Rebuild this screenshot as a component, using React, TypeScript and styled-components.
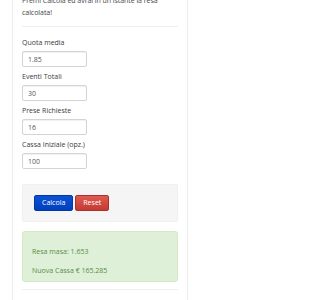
import React from 'react';
import styled, { createGlobalStyle } from 'styled-components';

const GlobalStyle = createGlobalStyle`
  body {
    margin: 0;
    background: #ffffff;
    font-family: 'Open Sans', 'Liberation Sans', sans-serif;
    color: #333333;
    overflow: hidden;
  }
`;

const Page = styled.div`
  margin-top: -5px;
  padding-left: 12px;
  width: 176px;
`;

const Card = styled.div`
  border-left: 1px solid #ececec;
  border-right: 1px solid #ececec;
  padding: 0 9px 10px 9px;
  background: #ffffff;
`;

const Intro = styled.p`
  margin: 0;
  font-size: 7px;
  line-height: 12px;
  color: #444444;
  white-space: nowrap;
  letter-spacing: -0.05px;
`;

const Rule = styled.hr`
  border: 0;
  border-top: 1px solid #eeeeee;
  margin: 7px 0 10px 0;
`;

const Field = styled.div`
  display: flex;
  flex-direction: column;
  align-items: flex-start;
  margin-bottom: 4px;
`;

const Label = styled.label`
  font-size: 7px;
  line-height: 11px;
  color: #3a3a3a;
  margin-bottom: 3px;
`;

const Input = styled.input`
  box-sizing: border-box;
  width: 65px;
  height: 16px;
  padding: 0 5px;
  border: 1px solid #d4d4d4;
  border-radius: 2px;
  box-shadow: inset 0 1px 1px rgba(0, 0, 0, 0.06);
  font-family: 'Open Sans', 'Liberation Sans', sans-serif;
  font-size: 7px;
  color: #555555;
  outline: none;
`;

const Well = styled.div`
  display: flex;
  gap: 2px;
  margin-top: 15px;
  padding: 10px 11px;
  background: #f5f5f5;
  border: 1px solid #f0f0f0;
  border-radius: 2px;
`;

const Button = styled.button<{ $tone: 'primary' | 'danger' }>`
  height: 16px;
  padding: 0 7px;
  border: 1px solid
    ${({ $tone }) => ($tone === 'primary' ? '#0038a8' : '#a8322b')};
  border-radius: 2px;
  background: ${({ $tone }) =>
    $tone === 'primary'
      ? 'linear-gradient(to bottom, #0a52d4, #0040bd)'
      : 'linear-gradient(to bottom, #e05a52, #c33a32)'};
  color: #ffffff;
  font-family: 'Open Sans', 'Liberation Sans', sans-serif;
  font-size: 7px;
  line-height: 14px;
`;

const Alert = styled.div`
  margin-top: 9px;
  padding: 14px 9px 4px 9px;
  background: #dff0d8;
  border: 1px solid #d6e9c6;
  border-radius: 3px;
  color: #5a8a4a;
  font-size: 7px;
`;

const AlertLine = styled.p`
  margin: 0 0 7px 0;
  line-height: 12px;

  &:last-child {
    margin-bottom: 0;
  }
`;

const BottomRule = styled.hr`
  border: 0;
  border-top: 1px solid #eeeeee;
  margin: 7px 0 0 0;
`;

const fields = [
  { label: 'Quota media', value: '1.85' },
  { label: 'Eventi Totali', value: '30' },
  { label: 'Prese Richieste', value: '16' },
  { label: 'Cassa Iniziale (opz.)', value: '100' },
];

export default function App() {
  return (
    <Page>
      <GlobalStyle />
      <Card>
        <Intro>
          Premi Calcola ed avrai in un istante la resa
          <br />
          calcolata!
        </Intro>
        <Rule />
        {fields.map((f) => (
          <Field key={f.label}>
            <Label>{f.label}</Label>
            <Input defaultValue={f.value} />
          </Field>
        ))}
        <Well>
          <Button $tone="primary">Calcola</Button>
          <Button $tone="danger">Reset</Button>
        </Well>
        <Alert>
          <AlertLine>Resa masa: 1.653</AlertLine>
          <AlertLine>Nuova Cassa € 165.285</AlertLine>
        </Alert>
        <BottomRule />
      </Card>
    </Page>
  );
}
